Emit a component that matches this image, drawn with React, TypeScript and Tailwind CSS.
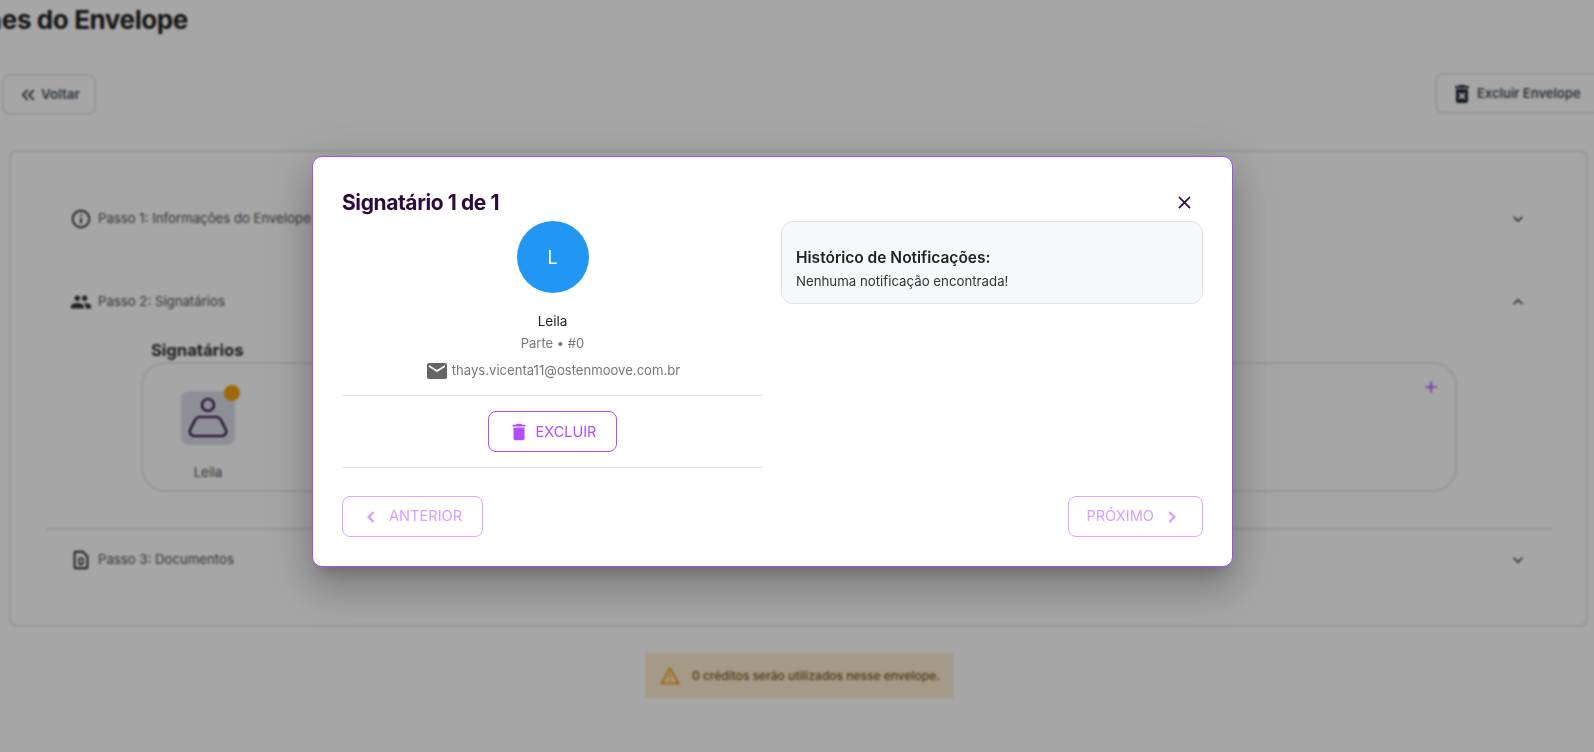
import React from "react";

const P = ({ d, className }: { d: string; className?: string }) => (
  <svg viewBox="0 0 24 24" fill="currentColor" className={className}><path d={d} /></svg>
);
const mail = "M20 4H4c-1.1 0-1.99.9-1.99 2L2 18c0 1.1.9 2 2 2h16c1.1 0 2-.9 2-2V6c0-1.1-.9-2-2-2zm0 4l-8 5-8-5V6l8 5 8-5v2z";
const del = "M6 19c0 1.1.9 2 2 2h8c1.1 0 2-.9 2-2V7H6v12zM19 4h-3.5l-1-1h-5l-1 1H5v2h14V4z";
const delX = "M6 19c0 1.1.9 2 2 2h8c1.1 0 2-.9 2-2V7H6v12zm2.46-7.12l1.41-1.41L12 12.59l2.12-2.12 1.41 1.41L13.41 14l2.12 2.12-1.41 1.41L12 15.41l-2.12 2.12-1.41-1.41L10.59 14l-2.13-2.12zM15.5 4l-1-1h-5l-1 1H5v2h14V4z";
const left = "M15.41 7.41L14 6l-6 6 6 6 1.41-1.41L10.83 12z";
const right = "M10 6L8.59 7.41 13.17 12l-4.58 4.59L10 18l6-6z";
const close = "M19 6.41L17.59 5 12 10.59 6.41 5 5 6.41 10.59 12 5 17.59 6.41 19 12 13.41 17.59 19 19 17.59 13.41 12z";
const info = "M11 7h2v2h-2zm0 4h2v6h-2zm1-9C6.48 2 2 6.48 2 12s4.48 10 10 10 10-4.48 10-10S17.52 2 12 2zm0 18c-4.41 0-8-3.59-8-8s3.59-8 8-8 8 3.59 8 8-3.59 8-8 8z";
const people = "M16 11c1.66 0 2.99-1.34 2.99-3S17.66 5 16 5c-1.66 0-3 1.34-3 3s1.34 3 3 3zm-8 0c1.66 0 2.99-1.34 2.99-3S9.66 5 8 5C6.34 5 5 6.34 5 8s1.34 3 3 3zm0 2c-2.33 0-7 1.17-7 3.5V19h14v-2.5c0-2.33-4.67-3.5-7-3.5zm8 0c-.29 0-.62.02-.97.05 1.16.84 1.97 1.97 1.97 3.45V19h6v-2.5c0-2.33-4.67-3.5-7-3.5z";
const warn = "M12 5.99L19.53 19H4.47L12 5.99M12 2L1 21h22L12 2zm1 14h-2v2h2v-2zm0-6h-2v4h2v-4z";
const dbl = "M17.59 18 19 16.59 14.42 12 19 7.41 17.59 6l-6 6zM11 18l1.41-1.41L7.83 12l4.58-4.59L11 6l-6 6z";
const down = "M7.41 8.59 12 13.17l4.59-4.58L18 10l-6 6-6-6z";
const up = "M12 8l-6 6 1.41 1.41L12 10.83l4.59 4.58L18 14z";
const plus = "M19 13h-6v6h-2v-6H5v-2h6V5h2v6h6v2z";

const Doc = () => (
  <svg viewBox="0 0 24 24" fill="none" stroke="#222" strokeWidth="2" className="h-[22px] w-[22px] -translate-x-px">
    <path d="M6 3h8l5 5v12a1 1 0 0 1-1 1H6a1 1 0 0 1-1-1V4a1 1 0 0 1 1-1z" />
    <path d="M14 9.500v5.500a2 2 0 0 1-4 0v-4a1.300 1.300 0 0 1 2.600 0" strokeWidth="1.600" />
  </svg>
);

function Step({ icon, label, chevron, className }: { icon: React.ReactNode; label: string; chevron: string; className: string }) {
  return (
    <div className={`flex h-5 items-center ${className}`}>
      <div className="flex w-[27px] items-center">{icon}</div>
      <span className="text-[13.2px] text-[#555]">{label}</span>
      <P d={chevron} className="ml-auto mr-[58px] h-[20px] w-[20px] text-[#444]" />
    </div>
  );
}

export default function App() {
  return (
    <div className="relative h-[752px] w-full overflow-hidden bg-white font-['Inter',sans-serif]">
      {/* page behind the dialog */}
      <div className="w-[1640px] pt-[5px]">
        <h1 className="ml-[-78px] h-[30px] whitespace-nowrap text-[26px] font-bold leading-[30px] tracking-[-0.4px] text-[#222]">Detalhes do Envelope</h1>
        <div className="mt-[39px] flex items-start justify-between pl-[2px]">
          <button className="flex h-[41px] w-[94px] items-center gap-[2px] rounded-lg border-2 border-[#e5e7eb] pl-[13px] text-[13.5px] font-semibold text-[#4b5563]">
            <P d={dbl} className="h-[22px] w-[22px] text-[#374151]" />
            Voltar
          </button>
          <button className="-mt-px flex h-[41px] w-[205px] items-center gap-[3px] rounded-lg border-2 border-[#e5e7eb] pl-[13px] text-[13px] font-semibold text-[#4b5563]">
            <P d={delX} className="h-[24px] w-[24px] text-[#1f2937]" />
            Excluir Envelope
          </button>
        </div>
        <div className="ml-[9px] mt-[35px] h-[477px] w-[1579px] rounded-lg border-2 border-[#e5e7eb] pl-[60px] pt-[57px]">
          <Step icon={<P d={info} className="h-[22px] w-[22px] -translate-x-px text-[#333]" />} label="Passo 1: Informações do Envelope" chevron={down} className="" />
          <Step icon={<P d={people} className="h-[22px] w-[22px] -translate-x-px text-[#333]" />} label="Passo 2: Signatários" chevron={up} className="mt-[63px]" />
          <h3 className="ml-[80px] mt-[27px] text-[16.600px] font-bold leading-[22px] text-[#333]">Signatários</h3>
          <div className="relative ml-[70px] mt-px h-[130px] w-[1316px] rounded-[24px] border-2 border-[#e5e7eb]">
            <div className="absolute left-[38px] top-[27px] flex h-[54px] w-[54px] items-center justify-center rounded-lg bg-[#dcdce8]">
              <svg viewBox="0 0 54 54" fill="none" stroke="#2d0a3d" strokeWidth="2.200" className="h-[54px] w-[54px]">
                <circle cx="27" cy="14" r="6" />
                <path d="M18 26h18c3 0 4 3 6 7l3 6c1 3-1 6-4 6H13c-3 0-5-3-4-6l3-6c2-4 3-7 6-7z" />
              </svg>
              <span className="absolute -right-[5px] -top-[6px] h-4 w-4 rounded-full bg-[#f59e0b]" />
            </div>
            <span className="absolute left-[38px] top-[99px] w-[54px] text-center text-[13px] text-[#555]">Leila</span>
            <P d={plus} className="absolute left-[1278px] top-[13px] h-[20px] w-[20px] text-[#a855f7]" />
          </div>
          <div className="-ml-[25px] mt-[36px] w-[1506px] border-t-2 border-[#e5e7eb]" />
          <Step icon={<Doc />} label="Passo 3: Documentos" chevron={down} className="mt-[20px]" />
        </div>
        <div className="ml-[645px] mt-[26px] flex h-[45px] w-[308px] items-center gap-[11px] bg-[#fdebd0] pl-[14px] text-[12px] font-medium text-[#7c5a1e]">
          <P d={warn} className="h-[22px] w-[22px] text-[#f59e0b]" />
          0 créditos serão utilizados nesse envelope.
        </div>
      </div>

      {/* backdrop */}
      <div className="absolute inset-0 bg-black/35 backdrop-blur-[1px]" />

      {/* dialog */}
      <div className="absolute left-[312px] top-[156px] flex h-[411px] w-[921px] flex-col rounded-[10px] border border-[#a14ff0] bg-white px-[29px] pt-[33px] shadow-[0_11px_15px_-7px_rgba(0,0,0,0.2),0_24px_38px_3px_rgba(0,0,0,0.14),0_9px_46px_8px_rgba(0,0,0,0.12)]">
        <div className="flex h-[31px] items-start justify-between">
          <h2 className="text-[21px] font-bold leading-[26px] tracking-[-0.4px] text-[#2d0a3d]">Signatário 1 de 1</h2>
          <P d={close} className="mr-[8px] mt-[2px] h-[21px] w-[21px] text-[#2d0a3d]" />
        </div>
        <div className="flex gap-[18px]">
          <div className="flex w-[421px] flex-col items-center">
            <div className="flex h-[72px] w-[72px] items-center justify-center rounded-full bg-[#2196f3] text-[18px] text-white">L</div>
            <p className="mt-[18px] text-[13.5px] leading-[20px] text-[#222]">Leila</p>
            <p className="mt-[2px] text-[13px] leading-[20px] text-[#777]">Parte • #0</p>
            <div className="mt-[7px] flex h-[22px] items-center gap-[3px] text-[13.1px] text-[#777]">
              <P d={mail} className="h-[24px] w-[24px] text-[#666]" />
              thays.vicenta11@ostenmoove.com.br
            </div>
            <div className="mt-[13px] w-full border-t border-[#e2e2e6]" />
            <button className="mt-[15px] flex h-[41px] w-[129px] items-center justify-center gap-[6px] rounded-lg border border-[#b44dff] text-[14.5px] text-[#b44dff]">
              <P d={del} className="-ml-[1px] h-[22px] w-[22px]" />
              EXCLUIR
            </button>
            <div className="mt-[15px] w-full border-t border-[#e2e2e6]" />
          </div>
          <div className="h-[83px] w-[422px] rounded-xl border border-[#dfe0ea] bg-[#f8f9fb] pl-[14px] pt-[26px]">
            <p className="text-[15.5px] font-semibold leading-[20px] text-[#222]">Histórico de Notificações:</p>
            <p className="mt-[3px] text-[13.25px] leading-[20px] text-[#333]">Nenhuma notificação encontrada!</p>
          </div>
        </div>
        <div className="mt-[28px] flex justify-between">
          <button className="flex h-[41px] w-[141px] items-center gap-[7px] rounded-lg border border-[#dca6ff] pl-[18px] pt-px text-[14.6px] text-[#d79fff]">
            <P d={left} className="-ml-[1px] h-[22px] w-[22px] stroke-current stroke-[0.6]" />
            ANTERIOR
          </button>
          <button className="flex h-[41px] w-[135px] items-center justify-end gap-[7px] rounded-lg border border-[#dca6ff] pr-[19px] pt-px text-[14.6px] text-[#d79fff]">
            PRÓXIMO
            <P d={right} className="h-[22px] w-[22px] stroke-current stroke-[0.6]" />
          </button>
        </div>
      </div>
    </div>
  );
}
